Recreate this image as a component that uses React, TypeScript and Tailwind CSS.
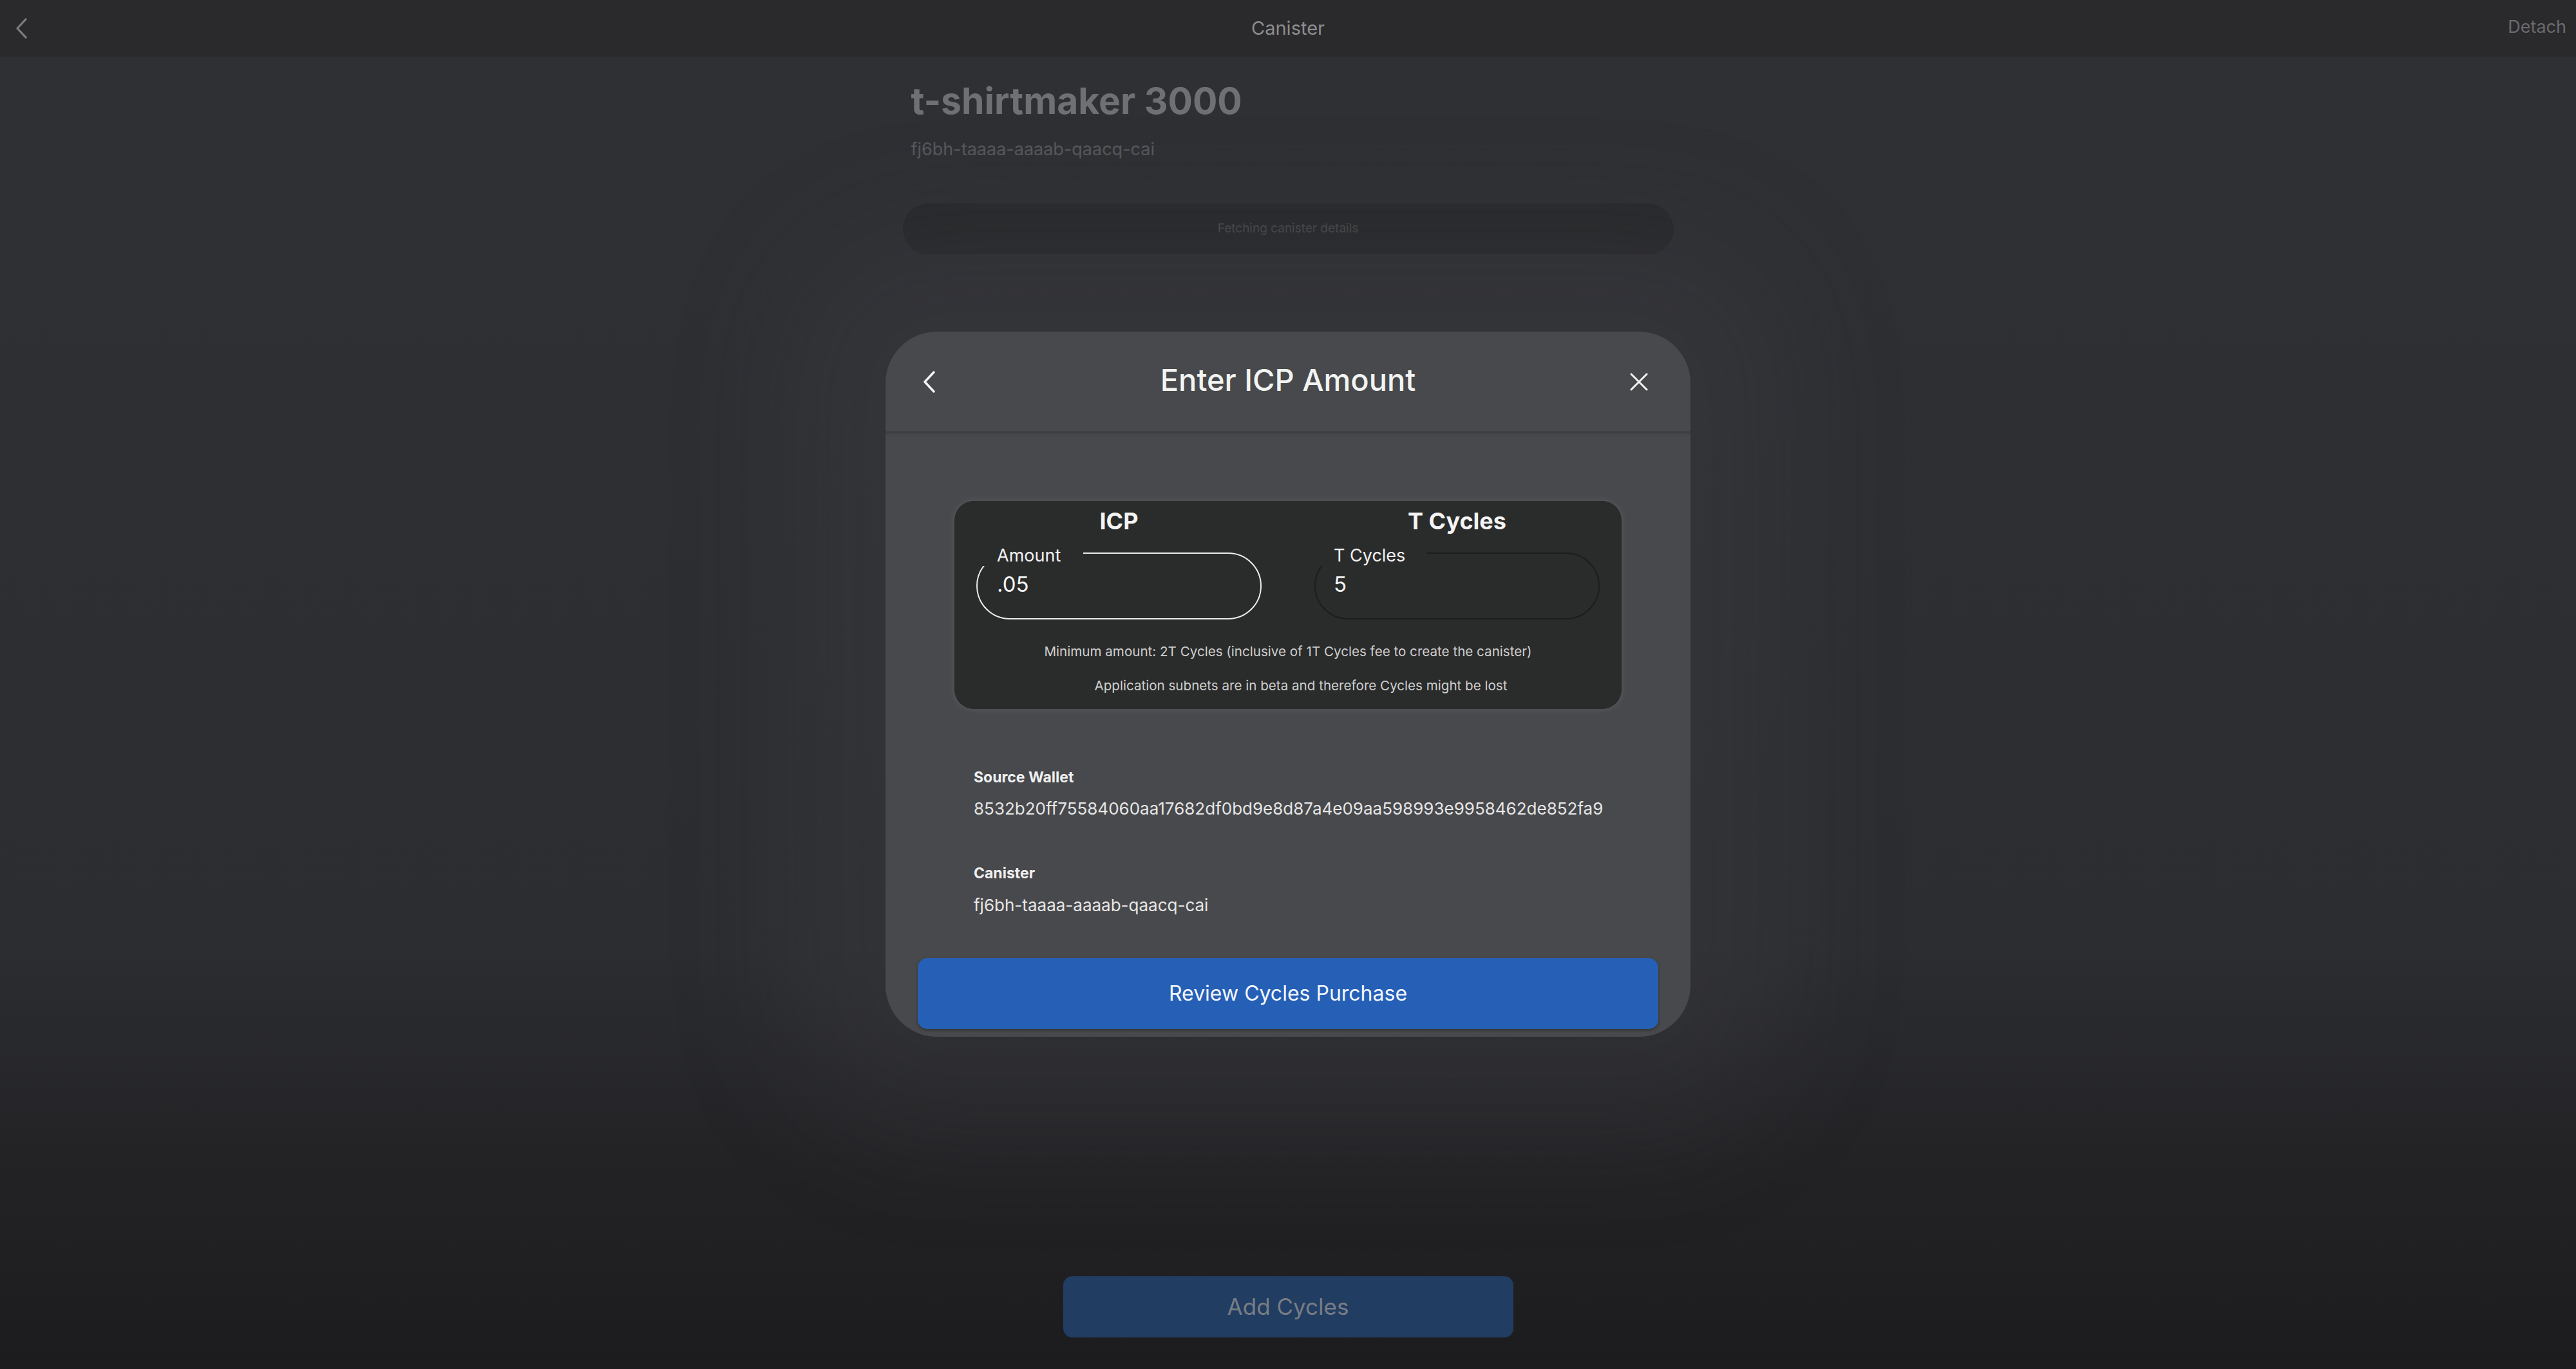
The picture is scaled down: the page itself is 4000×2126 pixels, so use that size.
import React from "react";

function Chevron({ className }: { className?: string }) {
  return (
    <svg className={className} viewBox="0 0 20 34" fill="none" stroke="currentColor" strokeWidth={3.5} strokeLinecap="round" strokeLinejoin="round">
      <path d="M17 2L3 17l14 15" />
    </svg>
  );
}

function CloseIcon({ className }: { className?: string }) {
  return (
    <svg className={className} viewBox="0 0 30 30" fill="none" stroke="currentColor" strokeWidth={3} strokeLinecap="round">
      <path d="M3 3l24 24M27 3L3 27" />
    </svg>
  );
}

function AmountField({ label, value, active }: { label: string; value: string; active?: boolean }) {
  return (
    <div
      className={
        active
          ? "relative flex h-[104px] w-[443px] items-center rounded-full border-2 border-[#ececec] pb-[6px] pl-[30px]"
          : "relative flex h-[104px] w-[443px] items-center rounded-full border-2 border-[#1c1d1d] pb-[6px] pl-[28px]"
      }
    >
      {/* notched label over the outline */}
      <span
        className={
          active
            ? "absolute left-[-4px] top-[-13px] bg-[#2a2b2b] pl-[34px] pr-[35px] text-[27px] leading-[32px] text-[#f2f2f2]"
            : "absolute left-[-4px] top-[-13px] bg-[#2a2b2b] pl-[32px] pr-[34px] text-[27px] leading-[32px] text-[#f2f2f2]"
        }
      >
        {label}
      </span>
      <span className="text-[33px] leading-[40px] text-[#f4f4f4]">{value}</span>
    </div>
  );
}

export default function App() {
  return (
    <div className="relative flex h-[2126px] w-[4000px] flex-col overflow-hidden bg-[#2e2f33] font-['Inter',sans-serif]">
      {/* Top bar */}
      <header className="grid h-[88px] shrink-0 grid-cols-[1fr_auto_1fr] items-center bg-[#2a2a2c]">
        <div className="pl-[24px] text-[#7b7b7d]">
          <Chevron className="h-[32px] w-[19px]" />
        </div>
        <span className="text-[29px] text-[#8d8d90]">Canister</span>
        <span className="justify-self-end pb-[4px] pr-[15px] text-[27px] text-[#6b6b6e]">Detach</span>
      </header>

      {/* Page underneath the dialog */}
      <main className="flex flex-1 flex-col items-center bg-[linear-gradient(to_bottom,#2f3034_0%,#2c2d31_68%,#232326_84%,#1c1c1e_100%)]">
        <div className="mt-[36px] flex w-[1197px] flex-col">
          <h1 className="pl-[13px] text-[57px] font-bold leading-[66px] text-[#6e7074]">t-shirtmaker 3000</h1>
          <span className="mt-[26px] pl-[13px] text-[27px] leading-[32px] text-[#56585c]">fj6bh-taaaa-aaaab-qaacq-cai</span>
          <div className="mt-[68px] flex h-[79px] items-center justify-center rounded-[40px] bg-[#28292c] text-[19px] text-[#47484b]">
            Fetching canister details
          </div>
        </div>
        <div className="flex-1" />
        <button className="mb-[49px] h-[95px] w-[699px] rounded-[14px] bg-[#223d62] text-[35px] text-[#787d85]">
          Add Cycles
        </button>
      </main>

      {/* Dialog */}
      <div className="absolute inset-0 flex justify-center pt-[515px]">
        <div className="flex h-fit w-[1250px] flex-col rounded-[80px] bg-[#48494c] shadow-[0_0_180px_160px_rgba(74,76,82,0.2)]">
          <div className="grid h-[157px] grid-cols-[1fr_auto_1fr] items-center border-b-2 border-[#3c3d40] shadow-[0_3px_4px_rgba(0,0,0,0.08)]">
            <div className="pl-[58px] text-[#f4f4f4]">
              <Chevron className="h-[34px] w-[20px]" />
            </div>
            <h2 className="pb-[4px] text-[47px] font-medium text-[#f2f4f2]">Enter ICP Amount</h2>
            <div className="justify-self-end pr-[65px] text-[#f4f4f4]">
              <CloseIcon className="h-[30px] w-[30px]" />
            </div>
          </div>

          <div className="flex flex-col px-[107px] pt-[106px]">
            <div className="flex flex-col rounded-[30px] bg-[#2a2b2b] px-[34px] pb-[24px] pt-[10px] shadow-[0_0_10px_2px_rgba(255,255,255,0.07)]">
              <div className="flex justify-between">
                <div className="flex w-[443px] flex-col items-center">
                  <span className="mb-[27px] text-[36px] font-bold leading-[43px] text-[#f4f4f4]">ICP</span>
                  <AmountField label="Amount" value=".05" active />
                </div>
                <div className="flex w-[443px] flex-col items-center">
                  <span className="mb-[27px] text-[36px] font-bold leading-[43px] text-[#f4f4f4]">T Cycles</span>
                  <AmountField label="T Cycles" value="5" />
                </div>
              </div>
              <p className="mt-[38px] text-center text-[20.6px] leading-[24px] text-[#cfcfcf]">
                Minimum amount: 2T Cycles (inclusive of 1T Cycles fee to create the canister)
              </p>
              <p className="mt-[29px] pl-[40px] text-center text-[20.6px] leading-[24px] text-[#cfcfcf]">
                Application subnets are in beta and therefore Cycles might be lost
              </p>
            </div>
          </div>

          <div className="flex flex-col pl-[137px] pt-[92px]">
            <span className="text-[23px] font-bold leading-[28px] text-[#f0f0f0]">Source Wallet</span>
            <span className="mt-[19px] text-[26px] leading-[32px] text-[#e6e6e6]">
              8532b20ff75584060aa17682df0bd9e8d87a4e09aa598993e9958462de852fa9
            </span>
            <span className="mt-[70px] text-[23px] font-bold leading-[28px] text-[#f0f0f0]">Canister</span>
            <span className="mt-[20px] text-[26px] leading-[32px] text-[#e6e6e6]">fj6bh-taaaa-aaaab-qaacq-cai</span>
          </div>

          <div className="px-[50px] pb-[12px] pt-[66px]">
            <button className="h-[110px] w-full rounded-[15px] bg-[#2660b6] text-[32px] text-[#f4f7ff] shadow-[0_2px_5px_rgba(0,0,0,0.3)]">
              Review Cycles Purchase
            </button>
          </div>
        </div>
      </div>
    </div>
  );
}
